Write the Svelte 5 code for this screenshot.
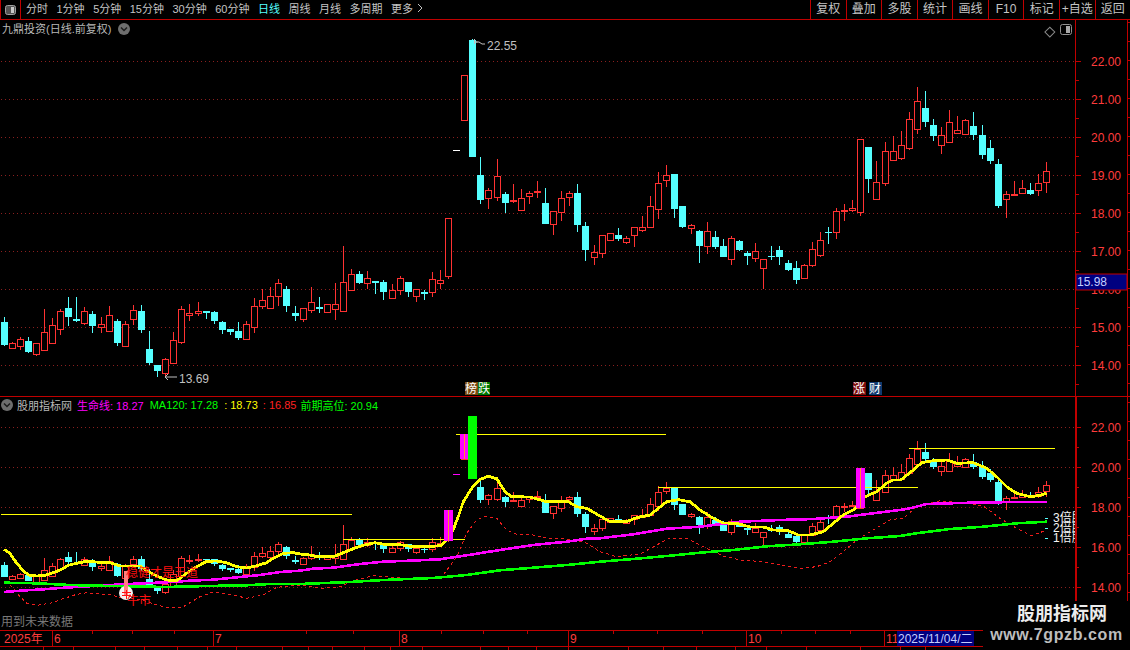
<script>
  const leftTabs = ['分时','1分钟','5分钟','15分钟','30分钟','60分钟','日线','周线','月线','多周期'];
  const rightTabs = ['复权','叠加','多股','统计','画线','F10','标记','+自选','返回'];

  // Each block: crop origin + scale, rows are x,colour,wickTop,bodyTop,bodyBottom,wickBottom
  const blocks = [
    [0,260,3,3,[[13,'c',170,186,256,258],[37,'r',245,250,265,265],[61,'r',232,238,260,270],[85,'c',232,243,275,279],[109,'r',248,250,284,288],[133,'r',148,217,272,272],[157,'r',174,196,251,251],[181,'r',148,154,209,224],[205,'c',111,144,171,198],[229,'c',111,177,183,186],[253,'r',141,154,191,195],[277,'c',153,162,198,219],[304,'r',171,193,203,219],[328,'r',138,166,215,215],[352,'c',177,183,249,258],[376,'r',183,193,260,262],[400,'r',135,151,179,195],[424,'c',135,153,210,219],[448,'c',213,267,309,315],[472,'c',316,316,335,351],[496,'r',294,298,341,352],[520,'r',216,241,311,311],[544,'r',138,148,248,252],[568,'r',132,160,166,183],[596,'r',126,154,160,168],[619,'c',153,153,159,177],[643,'c',153,156,183,192],[667,'c',183,186,210,222],[691,'c',207,207,216,225],[715,'c',186,213,234,240],[739,'r',183,193,239,239],[763,'r',114,139,201,219],[787,'r',87,121,140,147],[811,'r',81,109,146,146],[835,'r',57,70,109,138],[859,'c',78,87,138,156],[886,'c',138,159,168,183]]],
    [295,225,2.613,3,[[22,'r',248,250,284,290],[43,'r',186,232,257,265],[64,'c',216,246,251,264],[85,'r',238,238,263,263],[106,'r',175,238,254,285],[127,'r',63,172,260,260],[148,'r',132,148,197,197],[168,'c',138,148,174,177],[189,'r',138,160,176,192],[210,'c',168,168,174,207],[231,'c',165,171,201,225],[255,'r',177,196,219,222],[276,'r',153,160,196,210],[297,'c',171,171,201,216],[318,'r',193,193,213,231],[338,'c',195,201,207,225],[359,'r',141,163,203,216],[380,'r',135,166,174,192],[401,'r',-21,-21,152,162]]],
    [300,30,3,3,[[469,'w',361,360,362,362],[493,'r',136,136,272,272],[517,'c',27,30,381,381],[541,'c',381,435,510,522],[565,'r',474,481,505,537],[592,'r',387,439,503,513],[616,'c',486,492,519,549],[640,'r',462,509,512,519],[664,'r',477,505,542,542],[688,'r',483,490,500,522],[712,'r',453,484,487,504],[736,'c',474,519,582,582],[760,'r',544,544,584,615],[784,'r',483,505,548,573],[808,'r',483,490,503,528],[832,'c',462,489,585,606],[856,'c',576,588,660,693],[883,'r',645,666,681,705]]],
    [600,80,3,3,[[7,'r',465,465,518,533],[31,'r',459,460,482,482],[55,'c',444,465,477,483],[79,'r',468,474,485,491],[103,'r',441,442,467,501],[127,'r',408,442,452,456],[151,'r',348,379,443,443],[175,'r',276,310,389,417],[199,'r',255,286,302,321],[223,'c',282,282,387,414],[247,'c',378,378,441,444],[274,'r',432,436,446,462],[298,'c',450,453,498,549],[322,'r',426,454,500,522],[346,'c',453,471,501,507],[370,'c',477,498,531,531],[394,'r',468,475,539,555],[418,'c',480,483,510,513],[442,'c',513,519,528,555],[466,'r',489,514,536,546],[490,'r',537,538,566,627],[514,'c',498,529,531,540],[538,'c',498,510,531,555],[565,'c',540,549,570,573],[589,'c',543,564,600,612],[613,'r',552,556,596,596],[637,'r',486,508,557,561],[661,'r',456,481,527,531],[685,'c',441,456,459,492],[709,'r',384,394,458,477],[733,'r',372,391,394,423],[757,'r',360,385,391,396],[781,'r',178,178,398,408],[805,'c',201,201,297,339],[829,'r',243,307,359,359],[856,'r',186,214,311,318],[880,'r',168,214,242,242]]],
    [850,80,3,3,[[154,'r',153,196,236,239],[178,'r',96,118,206,209],[202,'r',21,64,149,162],[226,'c',33,84,126,141],[250,'c',117,135,168,183],[274,'r',141,166,197,222],[298,'r',90,127,188,188],[322,'r',108,151,161,161],[346,'r',117,121,164,164],[370,'c',96,138,165,180],[397,'c',135,165,225,237],[421,'c',180,204,243,252],[445,'c',237,252,378,384],[469,'r',333,343,358,414],[493,'r',303,341,344,348],[517,'r',300,325,341,343],[541,'c',309,330,342,345],[565,'r',282,310,331,348],[589,'r',246,274,307,339]]]
  ];

  const candles = blocks.flatMap(([ox, oy, sx, sy, rows]) =>
    rows.map(([x, col, wt, bt, bb, wb]) => ({
      x: Math.floor(ox + x / sx),
      col,
      wt: oy + wt / sy,
      bt: oy + bt / sy,
      bb: oy + bb / sy,
      wb: oy + wb / sy
    }))
  );

  const toSub = (y) => 467.5 + (y - 137.3) * (20 / 38);
  const subCandles = candles.map((c) => ({
    ...c,
    wt: toSub(c.wt), bt: toSub(c.bt), bb: toSub(c.bb), wb: toSub(c.wb)
  }));
  const snap = (v) => Math.round(v) + 0.5;
  const mainCandles = candles;

  const line = (parts) =>
    parts.flatMap(([ox, oy, pts]) => pts.map(([x, y]) => `${(ox + x / 3).toFixed(1)},${(oy + y / 3).toFixed(1)}`)).join(' ');

  const yellow = line([
    [0,500,[[12,148],[30,160],[50,190],[70,212],[85,225],[110,228],[135,226],[160,218],[185,208],[205,196],[230,190],[260,184],[300,187],[330,188],[360,198],[420,198],[440,212],[470,228],[500,240],[530,242],[560,220],[590,200],[620,184],[650,183],[680,188],[710,200],[740,204],[770,197],[800,188],[820,175],[850,160],[880,158]]],
    [300,400,[[0,462],[30,465],[50,470],[100,470],[130,458],[160,446],[190,436],[225,428],[260,434],[300,434],[340,440],[390,440],[425,436],[445,415],[460,388],[475,350],[490,305],[515,265],[540,238],[565,229],[590,236],[615,275],[635,290],[690,291],[740,305],[805,305],[830,320],[860,325],[900,348]]],
    [600,430,[[30,275],[80,275],[110,263],[150,255],[175,235],[200,215],[235,209],[270,215],[300,240],[340,265],[370,279],[410,280],[450,291],[490,291],[520,300],[565,302],[595,315],[630,315],[670,305],[700,280],[730,255],[760,240],[770,230],[795,200],[830,185],[860,160],[880,150],[900,150]]],
    [850,430,[[155,148],[190,120],[215,98],[250,92],[290,90],[320,100],[370,98],[410,115],[440,140],[470,170],[500,190],[540,200],[565,197],[590,190]]]
  ]);
  const magenta = line([
    [0,500,[[12,276],[60,272],[130,268],[180,264],[230,261],[280,258],[330,255],[430,250],[500,247],[570,242],[640,239],[700,233],[780,225],[840,216],[900,212]]],
    [300,400,[[40,506],[100,503],[180,492],[250,485],[330,482],[420,478],[500,466],[600,450],[700,435],[800,425],[860,416],[900,415]]],
    [600,430,[[100,313],[200,296],[300,290],[420,275],[540,270],[640,267],[740,260],[820,250],[900,240]]],
    [850,430,[[180,235],[230,222],[300,220],[400,217],[590,216]]]
  ]);
  const green = line([
    [0,500,[[12,248],[110,250],[210,255],[330,258],[500,261],[620,258],[740,256],[810,252],[900,252]]],
    [300,400,[[150,546],[250,540],[400,534],[500,525],[600,511],[700,503],[800,495],[900,485]]],
    [600,430,[[100,387],[200,378],[300,368],[400,360],[500,349],[600,343],[700,335],[800,325],[900,318]]],
    [850,430,[[200,310],[300,297],[400,290],[500,280],[590,275]]]
  ]);
  const redDash = line([
    [0,500,[[30,255],[45,270],[60,290],[80,310],[110,316],[150,310],[190,296],[230,283],[260,278],[330,284],[370,295],[420,298],[470,315],[510,325],[550,320],[600,290],[640,276],[700,285],[740,295],[790,285],[830,262],[900,255]]],
    [300,400,[[60,565],[120,560],[160,542],[220,527],[310,534],[400,537],[430,525],[470,470],[500,400],[530,360],[555,350],[590,355],[620,390],[650,403],[700,405],[750,415],[820,418],[860,430],[900,455]]],
    [600,430,[[50,380],[120,372],[170,345],[210,324],[260,325],[320,355],[370,378],[420,390],[490,395],[540,405],[600,415],[650,410],[690,395],[730,365],[770,330],[820,300],[870,270],[900,265]]],
    [850,430,[[160,265],[200,230],[270,212],[340,220],[400,228],[450,265],[500,295],[545,317],[590,300]]]
  ]);

  const mainPrices = [22,21,20,19,18,17,16,15,14];
  const mainY = (p) => 137 + (20 - p) * 38;
  const subPrices = [22,20,18,16,14];
  const subY = (p) => 467 + (20 - p) * 20;

  const months = [[52,'6'],[213,'7'],[399,'8'],[568,'9'],[746,'10'],[884,'11']];
  const topTicks = [92,132,174,306,353,441,483,527,613,657,702,781,815,850];
  const lowTicks = [43,73,115,144,177,207,236,282,308,332,364,390,422,480,508,536,568,628,663,696,735,766,806,860,900,925];
  const railTicks = Array.from({ length: 33 }, (_, i) => 22 + i * 19);
</script>

<div class="terminal">
  <header class="toolbar">
    <div class="toggle">
      <svg width="13" height="12" viewBox="0 0 13 12">
        <rect x="1.5" y="1.5" width="10" height="9" rx="2" fill="#555" stroke="#a0a0a0" />
        <rect x="7" y="3" width="3" height="6" fill="#c8c8c8" />
      </svg>
    </div>
    <nav class="tabs">
      {#each leftTabs as t}
        <span class:active={t === '日线'}>{t}</span>
      {/each}
      <span class="more">更多 <svg width="6" height="10" viewBox="0 0 6 10"><path d="M1 1l4 4-4 4" fill="none" stroke="#c0c0c0" /></svg></span>
    </nav>
    <nav class="actions">
      {#each rightTabs as t}
        <span>{t}</span>
      {/each}
    </nav>
  </header>

  <section class="pane main">
    <div class="title">
      <span>九鼎投资(日线.前复权)</span>
      <svg width="12" height="12" viewBox="0 0 12 12"><circle cx="6" cy="6" r="6" fill="#6e6e6e" /><path d="M3 4.5l3 3 3-3" fill="none" stroke="#1c1c1c" stroke-width="1.5" /></svg>
    </div>
    <svg class="plot" width="1130" height="377" viewBox="0 20 1130 377">
      {#each mainPrices as p}
        <line class="grid" x1="1" x2="1075" y1={mainY(p) + 0.5} y2={mainY(p) + 0.5} />
      {/each}
      {#each mainCandles as c}
        {#if c.col === 'w'}
          <rect x={c.x - 3} y="150" width="7" height="1" fill="#fff" />
        {:else if c.col === 'c'}
          <line class="wick cy" x1={c.x + 0.5} x2={c.x + 0.5} y1={Math.round(c.wt)} y2={Math.round(c.wb)} />
          <rect x={c.x - 3} y={Math.round(c.bt)} width="7" height={Math.max(1, Math.round(c.bb - c.bt))} fill="#55ffff" />
        {:else}
          <line class="wick rd" x1={c.x + 0.5} x2={c.x + 0.5} y1={Math.round(c.wt)} y2={Math.round(c.wb)} />
          <rect class="hollow" x={c.x - 2.5} y={snap(c.bt)} width="6" height={Math.max(1, Math.round(c.bb - c.bt))} />
        {/if}
      {/each}

      <path d="M476 42h3l3 2h3" class="mark" />
      <path d="M474.5 39v5M474.5 42h3" class="mark" />
      <text class="note" x="487" y="50">22.55</text>
      <path d="M177 377h-12M168 374l-3 3 3 3" class="mark" />
      <text class="note" x="179" y="383">13.69</text>

      <g class="flag">
        <rect x="465" y="382" width="13" height="13" fill="#7a4a10" />
        <rect x="478" y="382" width="12" height="13" fill="#007800" />
        <text x="465" y="393">榜</text>
        <text x="478" y="393">跌</text>
        <rect x="853" y="382" width="13" height="13" fill="#7c0c0c" />
        <rect x="869" y="382" width="13" height="13" fill="#103a70" />
        <text x="853" y="393">涨</text>
        <text x="869" y="393">财</text>
      </g>

      <rect x="1047" y="26" width="7" height="7" transform="rotate(45 1047 30)" fill="none" stroke="#8a8a8a" />
      <rect x="1060.5" y="24.5" width="11" height="10" rx="2" fill="none" stroke="#909090" />
      <rect x="1066" y="26" width="4" height="7" fill="#a8a8a8" />

      <line class="axis" x1="1075.5" x2="1075.5" y1="20" y2="397" />
      {#each mainPrices as p}
        <line class="axis" x1="1076" x2="1081" y1={mainY(p) + 0.5} y2={mainY(p) + 0.5} />
        <line class="axis" x1="1076" x2="1079" y1={mainY(p) + 19.5} y2={mainY(p) + 19.5} />
        <text class="price" x="1091" y={mainY(p) + 5}>{p}.00</text>
      {/each}
      <rect x="1076" y="274" width="51" height="16" fill="#000080" stroke="#c00000" />
      <text class="last" x="1077" y="286">15.98</text>
      <line class="axis" x1="1127.5" x2="1127.5" y1="20" y2="397" />
      {#each railTicks as y}
        {#if y < 397}<line class="axis" x1="1128" x2="1130" y1={y + 0.5} y2={y + 0.5} />{/if}
      {/each}
      <line class="axis" x1="0" x2="1130" y1="396.5" y2="396.5" />
    </svg>
  </section>

  <section class="pane sub">
    <div class="legend">
      <svg width="12" height="12" viewBox="0 0 12 12"><circle cx="6" cy="6" r="6" fill="#6e6e6e" /><path d="M3 4.5l3 3 3-3" fill="none" stroke="#1c1c1c" stroke-width="1.5" /></svg>
      <span class="name">股朋指标网</span>
      <span class="m">生命线: 18.27</span>
      <span class="g">MA120: 17.28</span>
      <span class="y">: 18.73</span>
      <span class="r">: 16.85</span>
      <span class="g">前期高位: 20.94</span>
    </div>
    <svg class="plot" width="1130" height="233" viewBox="0 397 1130 233">
      <defs>
        <clipPath id="tagclip"><rect x="1040" y="505" width="35" height="45" /></clipPath>
      </defs>
      {#each subPrices as p}
        <line class="grid" x1="1" x2="1075" y1={subY(p) + 0.5} y2={subY(p) + 0.5} />
      {/each}
      {#each subCandles as c}
        {#if c.col === 'w'}
          <rect x={c.x - 3} y="474" width="7" height="1" fill="#ff00ff" />
        {:else if c.col === 'c'}
          <line class="wick cy" x1={c.x + 0.5} x2={c.x + 0.5} y1={Math.round(c.wt)} y2={Math.round(c.wb)} />
          <rect x={c.x - 3} y={Math.round(c.bt)} width="7" height={Math.max(1, Math.round(c.bb - c.bt))} fill="#55ffff" />
        {:else}
          <line class="wick rd" x1={c.x + 0.5} x2={c.x + 0.5} y1={Math.round(c.wt)} y2={Math.round(c.wb)} />
          <rect class="hollow" x={c.x - 2.5} y={snap(c.bt)} width="6" height={Math.max(1, Math.round(c.bb - c.bt))} />
        {/if}
      {/each}

      <polyline class="series dash" points={redDash} />
      <polyline class="series mag" points={magenta} />
      <polyline class="series grn" points={green} />
      <polyline class="series yel" points={yellow} />

      <line class="thin" x1="1" x2="352" y1="514.5" y2="514.5" />
      <line class="thin" x1="343" x2="465" y1="539.5" y2="539.5" />
      <line class="thin" x1="456" x2="666" y1="434.5" y2="434.5" />
      <line class="thin" x1="658" x2="918" y1="487.5" y2="487.5" />
      <line class="thin" x1="909" x2="1055" y1="448.5" y2="448.5" />

      <rect x="444" y="510" width="9" height="31" fill="#ff00ff" />
      <rect x="448" y="510" width="1" height="31" fill="#ff9030" />
      <rect x="460" y="434" width="8" height="25" fill="#ff00ff" />
      <rect x="464" y="434" width="1" height="25" fill="#ff9030" />
      <rect x="468" y="416" width="9" height="63" fill="#00ff00" />
      <rect x="856" y="468" width="9" height="40" fill="#ff00ff" />
      <rect x="860" y="468" width="1" height="40" fill="#ff9030" />

      <circle cx="126" cy="593" r="7" fill="#f4f0f0" />
      <rect x="124" y="571" width="4" height="24" fill="#ff8080" />
      <path d="M121.5 592.5h9M121.5 595.5h9M126.5 590v9" class="cross" />
      <text class="warn" x="126" y="577">稳健才是王道</text>
      <text class="warn" x="127" y="605">牛市</text>

      <g clip-path="url(#tagclip)">
        <text class="tag" x="1053" y="522">3倍股</text>
        <text class="tag" x="1053" y="532">2倍股</text>
        <text class="tag" x="1053" y="542">1倍股</text>
      </g>
      <line class="cytick" x1="1045" x2="1048" y1="518.5" y2="518.5" />
      <line class="cytick" x1="1045" x2="1048" y1="528.5" y2="528.5" />
      <line class="cytick" x1="1045" x2="1048" y1="538.5" y2="538.5" />

      <rect x="1075" y="397" width="2" height="233" fill="#c00000" />
      {#each subPrices as p}
        <line class="axis" x1="1077" x2="1081" y1={subY(p) + 0.5} y2={subY(p) + 0.5} />
        <line class="axis" x1="1077" x2="1079" y1={subY(p) + 20.5} y2={subY(p) + 20.5} />
        <text class="price" x="1091" y={subY(p) + 5}>{p}.00</text>
      {/each}
      <line class="axis" x1="1127.5" x2="1127.5" y1="397" y2="630" />
      {#each railTicks as y}
        {#if y > 397}<line class="axis" x1="1128" x2="1130" y1={y + 0.5} y2={y + 0.5} />{/if}
      {/each}
      <text class="faded" x="1" y="626">用到未来数据</text>
    </svg>
  </section>

  <section class="dates">
    <svg width="1130" height="20" viewBox="0 630 1130 20">
      <line class="axis" x1="0" x2="1130" y1="630.5" y2="630.5" />
      <line class="axis" x1="0" x2="1130" y1="646.5" y2="646.5" />
      <text class="price" x="4" y="643">2025年</text>
      {#each months as [x, label]}
        <line class="axis" x1={x + 0.5} x2={x + 0.5} y1="631" y2="646" />
        <text class="price" x={x + 2} y="643">{label}</text>
      {/each}
      {#each topTicks as x}
        <line class="axis" x1={x + 0.5} x2={x + 0.5} y1="631" y2="634" />
      {/each}
      {#each lowTicks as x}
        <line class="axis" x1={x + 0.5} x2={x + 0.5} y1="646" y2="650" />
      {/each}
      <rect x="897" y="631" width="77" height="15" fill="#000080" />
      <text class="last" x="898" y="643">2025/11/04/二</text>
    </svg>
    <aside class="stamp">
      <strong>股朋指标网</strong>
      <em>www.7gpzb.com</em>
    </aside>
  </section>
</div>

<style>
  :global(body) {
    margin: 0;
    background: #000;
  }
  .terminal {
    width: 1130px;
    height: 650px;
    position: relative;
    overflow: hidden;
    background: #000;
    font-family: "Liberation Sans", "Noto Sans CJK SC", sans-serif;
    font-size: 12px;
    color: #c4c4c4;
    display: flex;
    flex-direction: column;
  }
  .toolbar {
    height: 19px;
    flex: none;
    display: flex;
    align-items: stretch;
    border-bottom: 1px solid #c00000;
    line-height: 19px;
  }
  .toggle {
    width: 21px;
    box-sizing: border-box;
    flex: none;
    border-left: 1px solid #c00000;
    border-right: 1px solid #c00000;
    display: flex;
    align-items: center;
    justify-content: center;
  }
  .tabs {
    display: flex;
    gap: 8.5px;
    margin-left: 5px;
    white-space: nowrap;
    font-size: 11px;
  }
  .tabs .active {
    color: #55ffff;
  }
  .more svg {
    margin-left: 1px;
  }
  .actions {
    margin-left: auto;
    display: flex;
    width: 320px;
  }
  .actions span {
    flex: 1;
    text-align: center;
    white-space: nowrap;
    border-left: 1px solid #c00000;
  }
  .pane {
    position: relative;
    flex: none;
  }
  .main {
    height: 377px;
  }
  .sub {
    height: 233px;
  }
  .plot {
    display: block;
  }
  .title {
    position: absolute;
    left: 2px;
    top: 1px;
    display: flex;
    align-items: center;
    gap: 7px;
    line-height: 16px;
    color: #b8b8b8;
    font-size: 11px;
  }
  .legend {
    position: absolute;
    left: 1px;
    top: 0;
    height: 16px;
    display: flex;
    align-items: center;
    font-size: 11px;
    white-space: nowrap;
  }
  .legend .name {
    margin: 0 5px 0 4px;
    color: #b8b8b8;
  }
  .legend .m { color: #ff00ff; margin-right: 6px; }
  .legend .g { color: #00ff00; margin-right: 6px; }
  .legend .y { color: #ffff00; margin-right: 5px; }
  .legend .r { color: #ff2020; margin-right: 4px; }
  .dates {
    position: relative;
    height: 20px;
    flex: none;
  }
  .dates > svg {
    display: block;
  }
  .stamp {
    position: absolute;
    left: 983px;
    top: -29px;
    width: 147px;
    height: 49px;
    background: #000;
    display: flex;
    flex-direction: column;
    align-items: center;
    justify-content: flex-end;
    padding-bottom: 7px;
    box-sizing: border-box;
  }
  .stamp strong {
    font-size: 18px;
    line-height: 24px;
    color: #ececec;
    margin-left: 11px;
  }
  .stamp em {
    font-style: normal;
    font-weight: bold;
    font-size: 16px;
    line-height: 17px;
    letter-spacing: 0.6px;
    color: #bdbdbd;
  }
  .grid {
    stroke: #8a1f1f;
    stroke-dasharray: 1 3;
    shape-rendering: crispEdges;
  }
  .axis {
    stroke: #c00000;
    shape-rendering: crispEdges;
  }
  .wick {
    shape-rendering: crispEdges;
  }
  .cy { stroke: #55ffff; }
  .rd { stroke: #ff3232; }
  .hollow {
    fill: #000;
    stroke: #ff3232;
    shape-rendering: crispEdges;
  }
  .mark {
    fill: none;
    stroke: #c0c0c0;
  }
  .cross {
    fill: none;
    stroke: #ff1010;
    shape-rendering: crispEdges;
  }
  .note {
    fill: #c0c0c0;
    font-size: 12px;
  }
  .flag text {
    fill: #fff;
    font-size: 12px;
  }
  .price {
    fill: #ff3c3c;
    font-size: 12px;
  }
  .last {
    fill: #c4cfff;
    font-size: 12px;
  }
  .series {
    fill: none;
    stroke-width: 2.6;
    shape-rendering: crispEdges;
  }
  .dash {
    stroke: #ee1c1c;
    stroke-width: 1;
    stroke-dasharray: 3 3;
  }
  .mag { stroke: #ff00ff; }
  .grn { stroke: #00ff00; }
  .yel { stroke: #ffff00; stroke-width: 2.8; }
  .thin {
    stroke: #ffff00;
    shape-rendering: crispEdges;
  }
  .warn {
    fill: #ff1010;
    font-size: 12px;
  }
  .tag {
    fill: #f4f4f4;
    font-size: 12px;
  }
  .cytick {
    stroke: #55ffff;
    shape-rendering: crispEdges;
  }
  .faded {
    fill: #787878;
    font-size: 12px;
  }
</style>
